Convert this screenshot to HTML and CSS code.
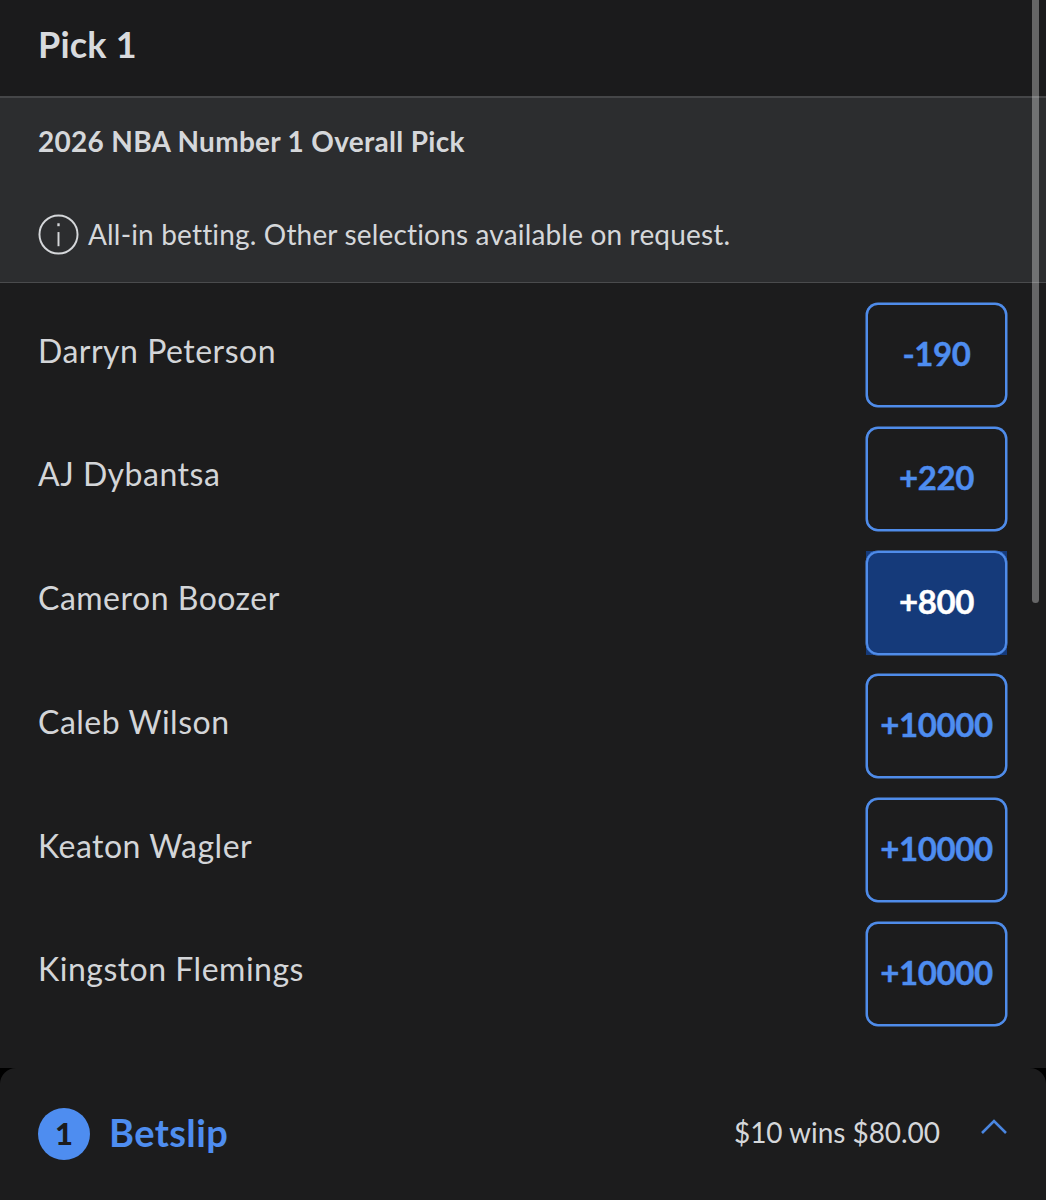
FILE: index.html
```html
<!DOCTYPE html>
<html lang="en">
<head>
  <meta charset="UTF-8" />
  <meta name="viewport" content="width=device-width, initial-scale=1.0" />
  <title>Pick 1</title>
  <link rel="stylesheet" href="styles.css">
</head>
<body>
  <div class="page">
    <div class="header"><h1>Pick 1</h1></div>
    <div class="info">
      <div class="market">2026 NBA Number 1 Overall Pick</div>
      <div class="note">
        <svg class="info-icon" width="41" height="41" viewBox="0 0 42 42" fill="none" stroke="#d5d7da">
          <circle cx="21" cy="21" r="19.5" stroke-width="2" />
          <path d="M21 18.5V33" stroke-width="2" />
          <path d="M21 9.5V12.5" stroke-width="2.4" />
        </svg>
        <span>All-in betting. Other selections available on request.</span>
      </div>
    </div>
    <div class="rows">
      <div class="row"><span class="name">Darryn Peterson</span><button class="odds">-190</button></div>
      <div class="row"><span class="name">AJ Dybantsa</span><button class="odds">+220</button></div>
      <div class="row"><span class="name">Cameron Boozer</span><button class="odds selected">+800</button></div>
      <div class="row"><span class="name">Caleb Wilson</span><button class="odds">+10000</button></div>
      <div class="row"><span class="name">Keaton Wagler</span><button class="odds">+10000</button></div>
      <div class="row"><span class="name">Kingston Flemings</span><button class="odds">+10000</button></div>
    </div>
    <div class="betslip">
      <div class="slip-left">
        <span class="count">1</span>
        <span class="slip-title">Betslip</span>
      </div>
      <div class="slip-right">
        <span class="wins">$10 wins $80.00</span>
        <svg class="chevron" width="28" height="18" viewBox="0 0 28 18" fill="none" stroke="#4a86e0" stroke-width="2.6">
          <path d="M2 16L14 4L26 16" />
        </svg>
      </div>
    </div>
  </div>
  <div class="scrollbar"></div>
</body>
</html>
```

FILE: styles.css
```css
html, body {
  margin: 0;
  background: #1c1c1d;
}
body {
  font-family: "Lato", "Open Sans", sans-serif;
  color: #d5d7da;
  width: 1046px;
  height: 1200px;
  overflow: hidden;
  position: relative;
}
.page {
  display: flex;
  flex-direction: column;
  height: 1200px;
  background: #000;
}
.header {
  height: 96px;
  padding: 0 38px;
  display: flex;
  align-items: center;
  background: #1b1b1c;
}
.header h1 {
  margin: 0 0 8px;
  font-size: 36px;
  font-weight: 700;
  letter-spacing: 0.2px;
  color: #d8dadd;
}
.info {
  height: 184px;
  padding: 0 38px;
  background: #2c2d2f;
  border-top: 2px solid #454648;
  border-bottom: 1px solid #4a4b4d;
  display: flex;
  flex-direction: column;
}
.market {
  margin-top: 26px;
  font-size: 28px;
  line-height: 34px;
  font-weight: 700;
  letter-spacing: 0.3px;
  color: #d5d7da;
}
.note {
  margin-top: 55px;
  display: flex;
  align-items: center;
  gap: 9px;
  font-size: 28px;
  line-height: 42px;
  letter-spacing: 0.17px;
}
.info-icon {
  flex: none;
}
.rows {
  flex: 1;
  background: #1c1c1d;
  padding: 20px 39px 0 38px;
  display: flex;
  flex-direction: column;
  gap: 19.8px;
}
.row {
  display: flex;
  justify-content: space-between;
  align-items: center;
}
.name {
  font-size: 32px;
  margin-bottom: 10px;
  letter-spacing: 0.5px;
  color: #d3d5d8;
}
.odds {
  position: relative;
  width: 141px;
  height: 104px;
  box-sizing: border-box;
  border: 2px solid #4f8cea;
  border-radius: 12px;
  box-shadow: 0 0 0 0.5px #4f8cea;
  background: #1c1c1d;
  color: #4e8df0;
  font-family: inherit;
  font-size: 33px;
  font-weight: 700;
  letter-spacing: -0.4px;
  -webkit-text-stroke: 0.4px currentColor;
  padding: 0 0 4px;
}
.odds.selected {
  background: #153a7a;
  color: #fff;
  border: none;
  border-radius: 0;
  box-shadow: none;
}
.odds.selected::after {
  content: "";
  position: absolute;
  inset: 0;
  border: 2px solid #4f8cea;
  border-radius: 12px;
  box-shadow: 0 0 0 0.5px #4f8cea;
}
.betslip {
  height: 132px;
  flex: none;
  background: #1c1c1d;
  border-radius: 16px 16px 0 0;
  padding: 0 38px;
  display: flex;
  justify-content: space-between;
  align-items: center;
}
.slip-left {
  display: flex;
  align-items: center;
  gap: 19px;
}
.count {
  width: 52px;
  height: 52px;
  padding-bottom: 2px;
  box-sizing: border-box;
  border-radius: 50%;
  background: #4e8df0;
  color: #1c1c1d;
  font-size: 31px;
  font-weight: 900;
  display: flex;
  align-items: center;
  justify-content: center;
}
.slip-title {
  margin: 0 0 5px;
  font-size: 38px;
  font-weight: 700;
  letter-spacing: 0.4px;
  color: #4e8df0;
}
.slip-right {
  display: flex;
  align-items: center;
  gap: 40px;
}
.wins {
  margin-bottom: 4px;
  font-size: 28px;
  letter-spacing: -0.05px;
  color: #d5d7da;
}
.chevron {
  margin-bottom: 16px;
}
.scrollbar {
  position: absolute;
  top: 0;
  left: 1032px;
  width: 7px;
  height: 603px;
  border-radius: 0 0 4px 4px;
  background: rgba(255, 255, 255, 0.33);
}
```
